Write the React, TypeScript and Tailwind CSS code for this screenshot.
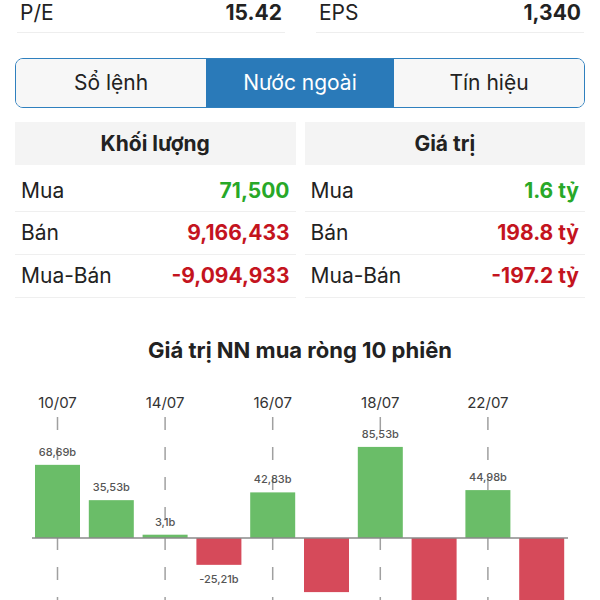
const bars = [68.69, 35.53, 3.1, -25.21, 42.83, -50.8, 85.53, -70.2, 44.98, -72.4];
const labels = ["68,69b", "35,53b", "3,1b", "-25,21b", "42,83b", "-50,8b", "85,53b", "-70,2b", "44,98b", "-72,4b"];
const dates = ["10/07", "14/07", "16/07", "18/07", "22/07"];

function StatRow({ label, value }: { label: string; value: string }) {
  return (
    <div className="flex h-[33px] items-start justify-between border-b border-[#eeeeee] px-[3px] leading-[26px]">
      <span className="text-[#222]">{label}</span>
      <span className="font-bold text-[#222]">{value}</span>
    </div>
  );
}

function Table({ title, rows }: { title: string; rows: { label: string; value: string; color: string }[] }) {
  return (
    <div className="flex-1">
      <div className="flex h-[43px] items-center justify-center bg-[#f4f4f4] font-bold text-[#222]">
        {title}
      </div>
      {rows.map((r, i) => (
        <div
          key={r.label}
          className={`flex items-center justify-between border-b border-[#efefef] px-[6px] ${
            i === 0 ? "h-[47px] pt-[6px]" : "h-[43px]"
          }`}
        >
          <span className="text-[#222]">{r.label}</span>
          <span className={`font-bold ${r.color}`}>{r.value}</span>
        </div>
      ))}
    </div>
  );
}

function Chart() {
  const base = 158;
  const k = 1.065;
  const x0 = 35;
  const pitch = 53.8;
  const w = 45;
  return (
    <svg width="600" height="220" viewBox="0 0 600 220" className="block">
      {dates.map((d, i) => {
        const cx = x0 + i * 2 * pitch + w / 2;
        return (
          <g key={d}>
            <text x={cx} y={28} textAnchor="middle" fontSize="15" fill="#333">
              {d}
            </text>
            <line x1={cx} y1={37} x2={cx} y2={220} stroke="#a0a0a0" strokeWidth="1.5" strokeDasharray="13 17" />
          </g>
        );
      })}
      {bars.map((v, i) => {
        const x = x0 + i * pitch;
        const h = Math.abs(v) * k;
        const y = v >= 0 ? base - h : base;
        return (
          <rect key={i} x={x} y={y} width={w} height={h} fill={v >= 0 ? "#6abd68" : "#d64a5a"} />
        );
      })}
      <line x1={32} y1={base} x2={568} y2={base} stroke="#8a8a8a" strokeWidth="1.5" />
      {bars.map((v, i) => {
        const cx = x0 + i * pitch + w / 2;
        const h = Math.abs(v) * k;
        const y = v >= 0 ? base - h - 9 : base + h + 18;
        // labels that fall below the visible area are skipped
        if (y > 215) return null;
        return (
          <text key={i} x={cx} y={y} textAnchor="middle" fontSize="11" fontWeight="500" fill="#555">
            {labels[i]}
          </text>
        );
      })}
    </svg>
  );
}

export default function App() {
  return (
    <div className="h-[600px] w-[600px] overflow-hidden bg-white font-['Inter',sans-serif] text-[21px]">
      <div className="flex px-[15px]">
        <div className="w-[270px] pl-[2px]">
          <StatRow label="P/E" value="15.42" />
        </div>
        <div className="ml-[31px] flex-1 pr-[1px]">
          <StatRow label="EPS" value="1,340" />
        </div>
      </div>

      <div className="mx-[15px] mt-[25px] flex h-[50px] overflow-hidden rounded-[8px] border-[1.5px] border-[#2f80be] text-[#222]">
        <div className="flex flex-1 items-center justify-center bg-[#f7f7f7]">Sổ lệnh</div>
        <div className="flex w-[188px] items-center justify-center bg-[#2a7ab9] text-white">Nước ngoài</div>
        <div className="flex flex-1 items-center justify-center bg-[#f7f7f7]">Tín hiệu</div>
      </div>

      <div className="mx-[15px] mt-[14px] flex gap-[9px]">
        <Table
          title="Khối lượng"
          rows={[
            { label: "Mua", value: "71,500", color: "text-[#28a828]" },
            { label: "Bán", value: "9,166,433", color: "text-[#c4141e]" },
            { label: "Mua-Bán", value: "-9,094,933", color: "text-[#c4141e]" },
          ]}
        />
        <Table
          title="Giá trị"
          rows={[
            { label: "Mua", value: "1.6 tỷ", color: "text-[#28a828]" },
            { label: "Bán", value: "198.8 tỷ", color: "text-[#c4141e]" },
            { label: "Mua-Bán", value: "-197.2 tỷ", color: "text-[#c4141e]" },
          ]}
        />
      </div>

      <div className="mt-[38px] text-center text-[22px] leading-[28px] font-bold text-[#222]">
        Giá trị NN mua ròng 10 phiên
      </div>
      <div className="mt-[16px]">
        <Chart />
      </div>
    </div>
  );
}
